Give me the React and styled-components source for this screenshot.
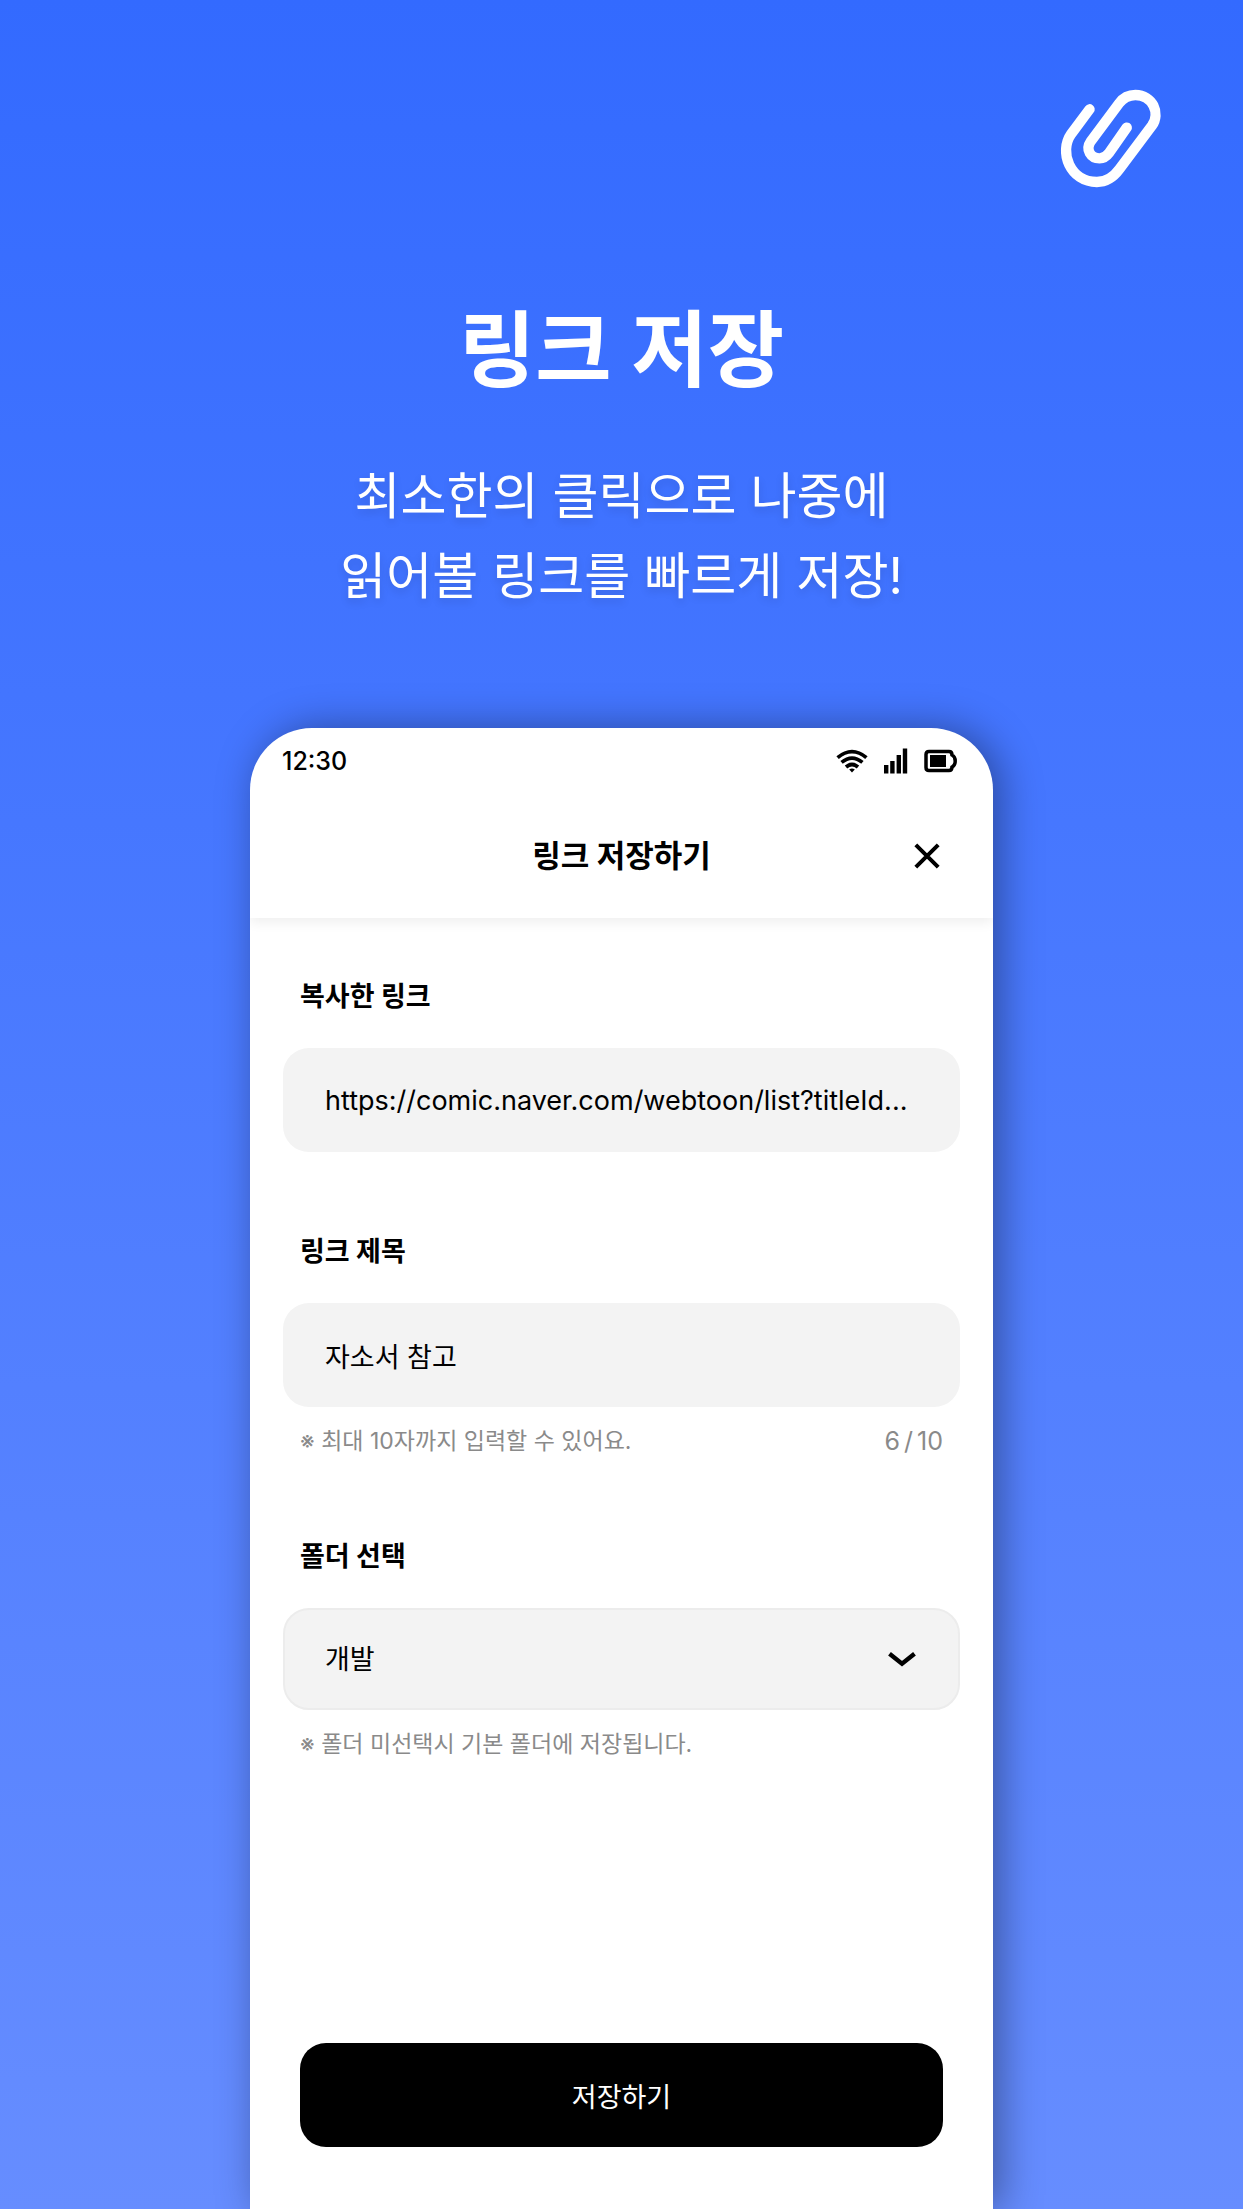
import React, { useState } from "react";
import styled, { createGlobalStyle } from "styled-components";

const GlobalStyle = createGlobalStyle`
  *, *::before, *::after { box-sizing: border-box; }
  body {
    margin: 0;
    font-family: Inter, "Noto Sans CJK KR", sans-serif;
    color: #000;
  }
  input, select, button { font: inherit; color: inherit; }
`;

const Page = styled.div`
  display: flex;
  flex-direction: column;
  align-items: center;
  min-height: 100vh;
  overflow: hidden;
  background: linear-gradient(180deg, #336aff 0%, #668dff 100%);
`;

const Brand = styled.header`
  display: flex;
  justify-content: flex-end;
  align-self: stretch;
  padding: 89px 81px 0;
`;

const Intro = styled.section`
  padding: 102px 20px 112px;
  color: #fff;
  text-align: center;
`;

const Headline = styled.h1`
  margin: 0;
  font-size: 83px;
  line-height: 120px;
  font-weight: 700;
`;

const Tagline = styled.p`
  margin: 46px 0 0;
  font-size: 50px;
  line-height: 80px;
  text-shadow: 0 4px 8px rgba(0, 0, 0, 0.12);
`;

const Phone = styled.main`
  flex: 1;
  display: flex;
  flex-direction: column;
  width: 100%;
  max-width: 743px;
  overflow: hidden;
  border-radius: 62px 62px 0 0;
  background: #fff;
  box-shadow: 8px 0 40px rgba(0, 0, 0, 0.38);
`;

const TopBar = styled.div`
  box-shadow: 0 4px 12px rgba(0, 0, 0, 0.07);
`;

const StatusBar = styled.div`
  display: flex;
  align-items: center;
  justify-content: space-between;
  padding: 17px 36px 0 32px;
  font-size: 25px;
  line-height: 32px;
  font-weight: 500;
`;

const StatusIcons = styled.div`
  display: flex;
  align-items: center;
  gap: 16px;
`;

const TitleBar = styled.div`
  display: grid;
  grid-template-columns: 44px 1fr 44px;
  align-items: center;
  padding: 57px 44px 40px;
`;

const Title = styled.h2`
  grid-column: 2;
  margin: 0;
  font-size: 31px;
  line-height: 44px;
  font-weight: 700;
  text-align: center;
`;

const CloseButton = styled.button`
  display: grid;
  place-items: center;
  height: 44px;
  padding: 0;
  border: 0;
  background: none;
  cursor: pointer;
`;

const Form = styled.form`
  flex: 1;
  display: flex;
  flex-direction: column;
  gap: 84px;
  padding: 63px 33px 62px;
`;

const Field = styled.div`
  display: flex;
  flex-direction: column;
`;

const Label = styled.label`
  margin: 0 17px 35px;
  font-size: 27px;
  line-height: 32px;
  font-weight: 700;
`;

const TextInput = styled.input`
  width: 100%;
  height: 104px;
  padding: 0 42px;
  border: 0;
  border-radius: 26px;
  background: #f3f3f3;
  font-size: 27px;
  text-overflow: ellipsis;
`;

const SelectBox = styled.div`
  display: grid;
  align-items: center;

  > * { grid-area: 1 / 1; }
  > svg { justify-self: end; margin-right: 44px; pointer-events: none; }
`;

const Select = styled.select`
  appearance: none;
  width: 100%;
  height: 102px;
  padding: 0 40px;
  border: 2px solid #ececec;
  border-radius: 26px;
  background: #f3f3f3;
  font-size: 27px;
`;

const Hint = styled.div`
  display: flex;
  justify-content: space-between;
  margin: 18px 17px 0;
  font-size: 23px;
  line-height: 32px;
  color: #8a8a8a;
`;

const Counter = styled.span`
  display: flex;
  gap: 4px;
  font-size: 25px;
`;

const SaveButton = styled.button`
  height: 104px;
  margin: auto 17px 0;
  border: 0;
  border-radius: 26px;
  background: #000;
  color: #fff;
  font-size: 27px;
  cursor: pointer;
`;

const ClipLogo = () => (
  <svg width="102" height="99" viewBox="60 55 305 298" fill="none" stroke="#fff" strokeWidth="31" strokeLinecap="round" aria-hidden="true">
    <path d="M148 116 L93 190 C54 245 90 335 170 335 C200 335 222 318 238 296 L336 165 C362 128 338 73 286 73 C264 73 249 82 237 98 L152 212 C134 238 152 264 178 264 C190 264 199 258 207 247 L260 171" />
  </svg>
);

const WifiIcon = () => (
  <svg width="32" height="24" viewBox="0 0 32 24" fill="none" stroke="#000" strokeWidth="3.8" aria-hidden="true">
    <path d="M1.6 8.6 Q16 -3.4 30.4 8.600" />
    <path d="M5.600 13.400 Q16 4.800 26.400 13.400" />
    <path d="M10 18 Q16 13 22 18" />
    <path d="M13.2 20.6 Q16 18.4 18.8 20.6 L16 23.6Z" fill="#000" stroke="none" />
  </svg>
);

const SignalIcon = () => (
  <svg width="24" height="26" viewBox="0 0 24 26" aria-hidden="true">
    <path d="M0 17h4.400v8.500H0zM6.200 13h4.400v12.500H6.200zM12.600 7h4.400v18.500h-4.400zM18.800.5h4.400v25h-4.400z" />
  </svg>
);

const BatteryIcon = () => (
  <svg width="33" height="24" viewBox="0 0 33 24" aria-hidden="true">
    <path d="M5 2.500H25Q28 2.500 28 6Q31.200 7.500 31.200 12Q31.200 16.500 28 18Q28 21.500 25 21.500H5Q2 21.500 2 18.500V5.500Q2 2.500 5 2.500Z" fill="none" stroke="#000" strokeWidth="3.500" />
    <path d="M6 6h16v12h-16z" />
  </svg>
);

const CloseIcon = () => (
  <svg width="26" height="26" viewBox="0 0 26 26" stroke="#000" strokeWidth="4" aria-hidden="true">
    <path d="M1.800 1.800 L24.200 24.200 M24.200 1.800 L1.800 24.200" />
  </svg>
);

const ChevronIcon = () => (
  <svg width="28" height="16" viewBox="0 0 28 16" fill="none" stroke="#000" strokeWidth="4.400" aria-hidden="true">
    <path d="M1.500 2.800 L14 12.800 L26.500 2.800" />
  </svg>
);

export default function App() {
  const [title, setTitle] = useState("자소서 참고");

  return (
    <>
      <GlobalStyle />
      <Page>
        <Brand><ClipLogo /></Brand>
        <Intro>
          <Headline>링크 저장</Headline>
          <Tagline>
            최소한의 클릭으로 나중에<br />
            읽어볼 링크를 빠르게 저장!
          </Tagline>
        </Intro>
        <Phone>
          <TopBar>
            <StatusBar>
              <span>12:30</span>
              <StatusIcons><WifiIcon /><SignalIcon /><BatteryIcon /></StatusIcons>
            </StatusBar>
            <TitleBar>
              <Title>링크 저장하기</Title>
              <CloseButton type="button" aria-label="닫기"><CloseIcon /></CloseButton>
            </TitleBar>
          </TopBar>
          <Form onSubmit={(event) => event.preventDefault()}>
            <Field>
              <Label htmlFor="link">복사한 링크</Label>
              <TextInput id="link" defaultValue="https://comic.naver.com/webtoon/list?titleId..." />
            </Field>
            <Field>
              <Label htmlFor="title">링크 제목</Label>
              <TextInput id="title" maxLength={10} value={title} onChange={(event) => setTitle(event.target.value)} />
              <Hint>
                <span>※ 최대 10자까지 입력할 수 있어요.</span>
                <Counter><span>{title.length}</span><span>/</span><span>10</span></Counter>
              </Hint>
            </Field>
            <Field>
              <Label htmlFor="folder">폴더 선택</Label>
              <SelectBox>
                <Select id="folder" defaultValue="개발">
                  <option>개발</option>
                </Select>
                <ChevronIcon />
              </SelectBox>
              <Hint>※ 폴더 미선택시 기본 폴더에 저장됩니다.</Hint>
            </Field>
            <SaveButton type="submit">저장하기</SaveButton>
          </Form>
        </Phone>
      </Page>
    </>
  );
}
